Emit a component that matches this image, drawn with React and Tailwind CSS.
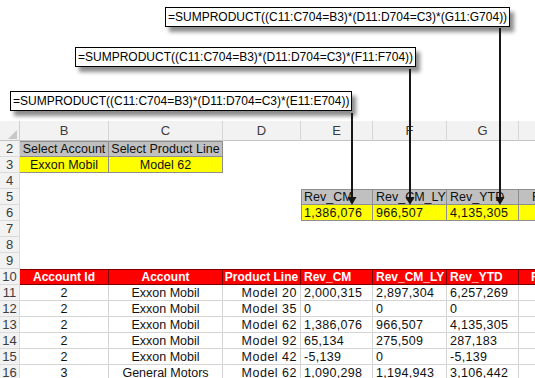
import React from "react";

const grid = "grid grid-cols-[20px_89px_114px_78px_72px_74px_72px_72px]";

const rows = [
  ["11", "2", "Exxon Mobil", "Model 20", "2,000,315", "2,897,304", "6,257,269"],
  ["12", "2", "Exxon Mobil", "Model 35", "0", "0", "0"],
  ["13", "2", "Exxon Mobil", "Model 62", "1,386,076", "966,507", "4,135,305"],
  ["14", "2", "Exxon Mobil", "Model 92", "65,134", "275,509", "287,183"],
  ["15", "2", "Exxon Mobil", "Model 42", "-5,139", "0", "-5,139"],
  ["16", "3", "General Motors", "Model 62", "1,090,298", "1,194,943", "3,106,442"],
];

function Cell({ className = "", children }) {
  return (
    <div className={"h-[16px] leading-[14px] whitespace-nowrap text-[12.5px] text-[#111] " + className}>
      {children}
    </div>
  );
}

function RowNum({ n }) {
  return (
    <div className="h-[16px] leading-[16px] text-center text-[13px] text-[#3c3c3c] bg-[#f2f2f2] border-r border-b border-[#dadada]">
      {n}
    </div>
  );
}

function Blank({ n }) {
  return (
    <div className={grid}>
      <RowNum n={n} />
      <Cell /><Cell /><Cell /><Cell /><Cell /><Cell /><Cell />
    </div>
  );
}

function Callout({ text, className }) {
  return (
    <div className={"inline-block border border-black bg-white px-[2px] leading-[18px] text-[12px] text-black whitespace-nowrap shadow-[4px_5px_4px_rgba(0,0,0,0.45)] " + className}>
      {text}
    </div>
  );
}

export default function App() {
  const gray = "bg-[#c0c0c0] border-r border-b border-[#8e8e8e]";
  const yellow = "bg-[#ffff00] border-r border-b border-[#8e8e8e] pt-[1px]";
  const red = "bg-[#ff0000] border-r border-b border-[#7a0000] font-bold text-white text-[12px]";
  const data = "border-r border-b border-[#d4d4d4] pt-[1px]";

  return (
    <div className="relative w-[535px] h-[378px] overflow-hidden bg-white font-['Liberation_Sans',Arial,sans-serif]">
      {/* formula callouts */}
      <div className="h-[121px] flex flex-col items-start">
        <Callout className="mt-[7px] ml-[165px]" text="=SUMPRODUCT((C11:C704=B3)*(D11:D704=C3)*(G11:G704))" />
        <Callout className="mt-[20px] ml-[75px]" text="=SUMPRODUCT((C11:C704=B3)*(D11:D704=C3)*(F11:F704))" />
        <Callout className="mt-[24px] ml-[10px]" text="=SUMPRODUCT((C11:C704=B3)*(D11:D704=C3)*(E11:E704))" />
      </div>

      {/* column letters */}
      <div className={grid + " h-[20px] bg-[#f2f2f2] border-b border-[#c4c4c4] text-[13px] text-[#3c3c3c]"}>
        <div className="relative border-r border-[#d0d0d0]">
          <div className="absolute right-[2px] bottom-[2px] w-0 h-0 border-l-[9px] border-l-transparent border-b-[9px] border-b-[#c8c8c8]" />
        </div>
        {["B", "C", "D", "E", "F", "G", "H"].map((c) => (
          <div key={c} className="text-center leading-[20px] border-r border-[#d6d6d6]">
            {c === "H" ? "" : c}
          </div>
        ))}
      </div>

      {/* row 2 / 3: selectors */}
      <div className={grid}>
        <RowNum n="2" />
        <Cell className={gray + " border-t text-center"}>Select Account</Cell>
        <Cell className={gray + " border-t text-center"}>Select Product Line</Cell>
        <Cell /><Cell /><Cell /><Cell /><Cell />
      </div>
      <div className={grid}>
        <RowNum n="3" />
        <Cell className={yellow + " text-center"}>Exxon Mobil</Cell>
        <Cell className={yellow + " text-center"}>Model 62</Cell>
        <Cell /><Cell /><Cell /><Cell /><Cell />
      </div>
      <Blank n="4" />

      {/* row 5 / 6: results */}
      <div className={grid}>
        <RowNum n="5" />
        <Cell /><Cell /><Cell />
        <Cell className={gray + " border-t border-l pl-[2px]"}>Rev_CM</Cell>
        <Cell className={gray + " border-t pl-[3px]"}>Rev_CM_LY</Cell>
        <Cell className={gray + " border-t pl-[3px]"}>Rev_YTD</Cell>
        <Cell className={gray + " border-t pl-[13px] overflow-hidden"}>Rev_YTD_LY</Cell>
      </div>
      <div className={grid}>
        <RowNum n="6" />
        <Cell /><Cell /><Cell />
        <Cell className={yellow + " border-l pl-[2px] tracking-[0.3px]"}>1,386,076</Cell>
        <Cell className={yellow + " pl-[3px] tracking-[0.3px]"}>966,507</Cell>
        <Cell className={yellow + " pl-[3px] tracking-[0.3px]"}>4,135,305</Cell>
        <Cell className={yellow} />
      </div>
      <Blank n="7" />
      <Blank n="8" />
      <Blank n="9" />

      {/* row 10: table header */}
      <div className={grid}>
        <RowNum n="10" />
        <Cell className={red + " border-t text-center"}>Account Id</Cell>
        <Cell className={red + " border-t text-center"}>Account</Cell>
        <Cell className={red + " border-t text-center"}>Product Line</Cell>
        <Cell className={red + " border-t pl-[3px]"}>Rev_CM</Cell>
        <Cell className={red + " border-t pl-[3px]"}>Rev_CM_LY</Cell>
        <Cell className={red + " border-t pl-[3px]"}>Rev_YTD</Cell>
        <Cell className={red + " border-t pl-[12px] overflow-hidden"}>Rev_YTD_LY</Cell>
      </div>

      {rows.map((r) => (
        <div key={r[0]} className={grid}>
          <RowNum n={r[0]} />
          <Cell className={data + " text-center"}>{r[1]}</Cell>
          <Cell className={data + " text-center"}>{r[2]}</Cell>
          <Cell className={data + " text-right pr-[3px] tracking-[0.5px]"}>{r[3]}</Cell>
          <Cell className={data + " pl-[3px] tracking-[0.3px]"}>{r[4]}</Cell>
          <Cell className={data + " pl-[3px] tracking-[0.3px]"}>{r[5]}</Cell>
          <Cell className={data + " pl-[3px] tracking-[0.3px]"}>{r[6]}</Cell>
          <Cell className={data} />
        </div>
      ))}

      {/* arrows from callouts to result cells */}
      <svg className="absolute left-0 top-0 pointer-events-none" width="535" height="378">
        <g stroke="#161616" strokeWidth="2">
          <line x1="500" y1="28" x2="500" y2="199" />
          <line x1="410" y1="69" x2="410" y2="199" />
          <line x1="352" y1="113" x2="352" y2="199" />
        </g>
        <g fill="#161616">
          <polygon points="495.5,197 504.5,197 500,205" />
          <polygon points="405.5,197 414.5,197 410,205" />
          <polygon points="347.5,197 356.5,197 352,205" />
        </g>
      </svg>
    </div>
  );
}
